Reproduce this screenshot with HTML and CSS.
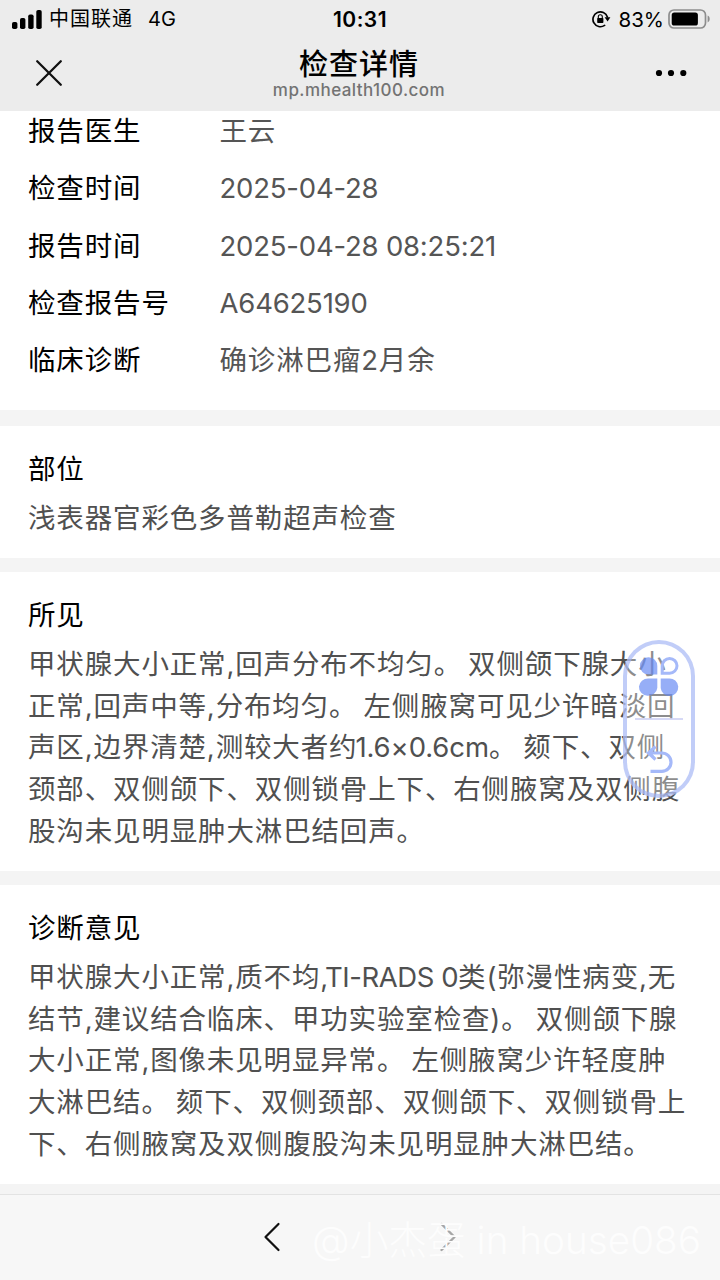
FILE: index.html
```html
<!DOCTYPE html>
<html lang="zh-CN">
<head>
    <meta charset="UTF-8">
    <meta name="viewport" content="width=device-width, initial-scale=1.0">
    <title>检查详情</title>
    <link rel="stylesheet" href="styles.css">
</head>
<body>
    <div class="page">
        <header class="header">
            <div class="status-bar">
                <div class="status-left">
                    <svg class="signal" width="31" height="19" viewBox="0 0 31 19">
                        <rect x="0" y="12" width="5.4" height="7" rx="1.8"/>
                        <rect x="8" y="8" width="5.4" height="11" rx="1.8"/>
                        <rect x="16.2" y="4.5" width="5.4" height="14.5" rx="1.8"/>
                        <rect x="24.3" y="0" width="5.4" height="19" rx="1.8"/>
                    </svg>
                    <span class="carrier">中国联通</span>
                    <span class="network">4G</span>
                </div>
                <div class="clock">10:31</div>
                <div class="status-right">
                    <svg width="19" height="18" viewBox="0 0 19 18">
                        <path d="M12.6 15.4A7.4 7.4 0 1 1 15.4 7" fill="none" stroke="#000" stroke-width="1.7" stroke-linecap="round"/>
                        <path d="M12.6 7.2H18.4L15.6 11.6Z" fill="#000"/>
                        <rect x="5.2" y="8" width="6.2" height="5" rx="0.7" fill="#000"/>
                        <path d="M6.3 8.5V6.8a2 2 0 0 1 4 0V8.5" fill="none" stroke="#000" stroke-width="1.1"/>
                    </svg>
                    <span class="percent">83%</span>
                    <svg width="43" height="20" viewBox="0 0 43 20">
                        <rect x="1" y="1" width="36.5" height="18" rx="5" fill="none" stroke="#8d8d8d" stroke-width="1.7"/>
                        <rect x="3.7" y="3.4" width="26.2" height="13.2" rx="2.6" fill="#000"/>
                        <path d="M39.6 6.6c2.8 1 2.8 5.8 0 6.8Z" fill="#8d8d8d"/>
                    </svg>
                </div>
            </div>
            <div class="nav-bar">
                <svg class="close" width="28" height="28" viewBox="0 0 28 28">
                    <path d="M2.2 2.2L25.8 25.8M25.8 2.2L2.2 25.8" stroke="#111" stroke-width="2.3" stroke-linecap="round"/>
                </svg>
                <div class="nav-title">
                    <h1>检查详情</h1>
                    <p>mp.mhealth100.com</p>
                </div>
                <svg class="more" width="32" height="8" viewBox="0 0 32 8">
                    <circle cx="4" cy="4" r="3.1"/>
                    <circle cx="16" cy="4" r="3.1"/>
                    <circle cx="28.3" cy="4" r="3.1"/>
                </svg>
            </div>
        </header>

        <main class="content">
            <section class="card info">
                <dl>
                    <dt>报告医生</dt><dd>王云</dd>
                    <dt>检查时间</dt><dd class="num">2025-04-28</dd>
                    <dt>报告时间</dt><dd class="num">2025-04-28 08:25:21</dd>
                    <dt>检查报告号</dt><dd class="num">A64625190</dd>
                    <dt>临床诊断</dt><dd>确诊淋巴瘤2月余</dd>
                </dl>
            </section>
            <section class="card">
                <h2>部位</h2>
                <p>浅表器官彩色多普勒超声检查</p>
            </section>
            <section class="card">
                <h2>所见</h2>
                <p>甲状腺大小正常,回声分布不均匀。 双侧颌下腺大小<br>
                正常,回声中等,分布均匀。 左侧腋窝可见少许暗淡回<br>
                声区,边界清楚,测较大者约<span class="latin">1.6×0.6cm</span>。 颏下、双侧<br>
                颈部、双侧颌下、双侧锁骨上下、右侧腋窝及双侧腹<br>
                股沟未见明显肿大淋巴结回声。</p>
            </section>
            <section class="card">
                <h2>诊断意见</h2>
                <p>甲状腺大小正常,质不均,<span class="latin grade">TI-RADS 0</span>类(弥漫性病变,无<br>
                结节,建议结合临床、甲功实验室检查)。 双侧颌下腺<br>
                大小正常,图像未见明显异常。 左侧腋窝少许轻度肿<br>
                大淋巴结。 颏下、双侧颈部、双侧颌下、双侧锁骨上<br>
                下、右侧腋窝及双侧腹股沟未见明显肿大淋巴结。</p>
            </section>
        </main>

        <footer class="toolbar">
            <svg width="18" height="30" viewBox="0 0 18 30">
                <path d="M15.5 2L2.5 15L15.5 28" fill="none" stroke="#111" stroke-width="2.2" stroke-linecap="round" stroke-linejoin="round"/>
            </svg>
            <svg width="18" height="30" viewBox="0 0 18 30">
                <path d="M2.5 2L15.5 15L2.5 28" fill="none" stroke="#a6a6a6" stroke-width="2.4" stroke-linecap="round" stroke-linejoin="round"/>
            </svg>
            <span class="watermark">@小杰蛋 in house086</span>
        </footer>

        <div class="float-menu">
            <svg width="72" height="158" viewBox="0 0 72 158">
                <g fill="#6487f3" fill-opacity="0.68">
                    <path d="M34.3 34.6H25.5A8.7 8.7 0 1 1 34.3 26Z"/>
                    <path d="M34.3 38.4V48A9.2 8.7 0 1 1 25.5 38.4Z"/>
                    <path d="M37.7 38.4H46A8.8 8.8 0 1 1 37.7 48Z"/>
                </g>
                <path d="M39.2 33.2V25.8A7.4 7.4 0 1 1 46.6 33.2Z" fill="none" stroke="#a5b9f9" stroke-width="3"/>
                <path d="M12 79H60" stroke="#c9cdf3" stroke-width="1.5"/>
                <path d="M32.5 106.5L25.5 113L32.5 119.5M26.5 113H38.8A9.2 9.2 0 0 1 38.8 131.4H27.5" fill="none" stroke="#a5b9f9" stroke-width="3.2"/>
            </svg>
        </div>
    </div>
</body>
</html>
```
FILE: styles.css
```css
* {
    box-sizing: border-box;
}
body {
    margin: 0;
    font-family: Inter, "Noto Sans CJK SC", sans-serif;
    background-color: #f4f4f4;
    color: #000;
}
h1, h2, p, dl, dd {
    margin: 0;
    font-weight: 400;
}
svg {
    display: block;
    flex: none;
}
.page {
    position: relative;
    display: flex;
    flex-direction: column;
    width: 720px;
    height: 1280px;
    overflow: hidden;
}
.header {
    flex: none;
    height: 111px;
    background-color: #ececec;
}
.status-bar {
    display: grid;
    grid-template-columns: 1fr auto 1fr;
    align-items: center;
    height: 37px;
    padding: 0 9px 0 12px;
    font-size: 20px;
    line-height: 37px;
}
.status-left,
.status-right {
    display: flex;
    align-items: center;
}
.status-right {
    justify-content: flex-end;
}
.carrier {
    margin-left: 6px;
    padding-top: 1px;
    letter-spacing: 1px;
}
.network {
    margin-left: 15px;
}
.clock {
    margin-right: 3px;
    font-size: 21px;
    font-weight: 600;
    letter-spacing: 0.5px;
}
.percent {
    margin: 0 4px 0 8px;
    font-size: 20.5px;
}
.nav-bar {
    display: flex;
    align-items: center;
    justify-content: space-between;
    height: 72px;
    padding: 0 33px 0 35px;
}
.nav-title {
    text-align: center;
}
.nav-title h1 {
    font-size: 29px;
    font-weight: 500;
    line-height: 36px;
    letter-spacing: 1px;
}
.nav-title p {
    margin-top: -1px;
    font-size: 17px;
    font-weight: 500;
    line-height: 17px;
    letter-spacing: 0.45px;
    color: #737373;
}
.content {
    flex: 1;
    display: flex;
    flex-direction: column;
    gap: 14px;
    overflow: hidden;
}
.card {
    flex: none;
    padding: 23px 0 18.5px 28px;
    background-color: #fff;
    font-size: 27.5px;
    line-height: 41.75px;
    letter-spacing: 0.85px;
    word-spacing: -2.5px;
    white-space: nowrap;
}
.card h2 {
    font-size: 27.5px;
}
.card p {
    margin-top: 7px;
    color: #505050;
}
.info {
    height: 299px;
    margin-bottom: 2px;
    padding: 0 0 0 28px;
}
.info dl {
    display: grid;
    grid-template-columns: 191.5px 1fr;
    margin-top: -8px;
    line-height: 57.3px;
}
.info dd {
    color: #555;
}
.info .num {
    letter-spacing: -0.2px;
    word-spacing: 0;
}
.latin {
    margin-left: -2px;
    letter-spacing: -0.1px;
}
.grade {
    margin-left: -4px;
    letter-spacing: -0.45px;
    word-spacing: 0;
}
.toolbar {
    position: relative;
    flex: none;
    display: flex;
    justify-content: center;
    gap: 158px;
    height: 86px;
    padding-top: 27px;
    border-top: 1px solid #e3e3e3;
    background-color: #f7f7f7;
}
.watermark {
    position: absolute;
    right: 19px;
    top: 20px;
    font-size: 38.7px;
    font-weight: 300;
    line-height: 50px;
    color: #fdfdfd;
    white-space: nowrap;
}
.float-menu {
    position: absolute;
    left: 623px;
    top: 640px;
    width: 72px;
    height: 158px;
    border-radius: 36px;
    background-color: rgba(255, 255, 255, 0.35);
    box-shadow: inset 0 0 0 4px rgba(160, 178, 245, 0.65);
}
```
